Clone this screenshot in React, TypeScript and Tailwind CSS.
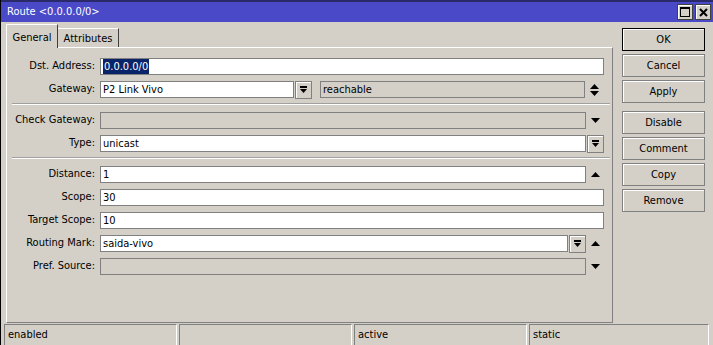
import React from "react";

const Up = () => (
  <svg width="9" height="5" viewBox="0 0 9 5"><path d="M0 5h9L4.5 0z" fill="#000" /></svg>
);
const Down = () => (
  <svg width="9" height="5" viewBox="0 0 9 5"><path d="M0 0h9L4.5 5z" fill="#000" /></svg>
);
const UpDown = () => (
  <svg width="9" height="12" viewBox="0 0 9 12">
    <path d="M0 5h9L4.5 0z" fill="#000" />
    <path d="M0 7h9L4.5 12z" fill="#000" />
  </svg>
);

const DropBtn = () => (
  <div className="ml-px flex h-[18px] w-[17px] shrink-0 items-center justify-center border border-[#808080] shadow-[inset_1px_1px_0_#fff]">
    <svg width="9" height="9" viewBox="0 0 9 9">
      <rect x="1" y="1" width="7" height="2" fill="#000" />
      <path d="M1 4h7L4.5 8z" fill="#000" />
    </svg>
  </div>
);

const Field = ({ w, value, disabled, children }: { w?: string; value?: string; disabled?: boolean; children?: React.ReactNode }) => (
  <div
    className={`flex h-[17px] shrink-0 items-center border border-[#808080] pl-[2px] leading-none ${disabled ? "bg-[#d4d0c8]" : "bg-white"} ${w ?? "w-full"}`}
  >
    {children ?? value}
  </div>
);

const IconCell = ({ children }: { children?: React.ReactNode }) => (
  <div className="flex w-[18px] shrink-0 items-center justify-center">{children}</div>
);

const Row = ({ label, children }: { label: string; children: React.ReactNode }) => (
  <div className="flex h-[17px] shrink-0 items-center">
    <div className="w-[88px] shrink-0 text-right">{label}</div>
    <div className="ml-[5px] flex w-[504px] items-center">{children}</div>
  </div>
);

const Sep = () => (
  <div className="mt-[5px] mb-[7px] ml-[5px] w-[598px] shrink-0 border-t border-b border-t-[#a0a0a0] border-b-white" />
);

const Btn = ({ label, primary }: { label: string; primary?: boolean }) => (
  <div
    className={`flex h-[23px] w-[83px] items-center justify-center border pt-[2px] shadow-[inset_1px_1px_0_#fff] ${primary ? "border-black" : "border-[#808080]"}`}
  >
    {label}
  </div>
);

const Status = ({ w, text }: { w: string; text?: string }) => (
  <div className={`flex h-[22px] items-center border border-t-[#808080] border-l-[#808080] border-r-white border-b-white pl-[3px] ${w}`}>
    {text}
  </div>
);

export default function App() {
  return (
    <div className="flex h-[345px] w-[713px] flex-col overflow-hidden border-l border-black bg-[#d4d0c8] font-['DejaVu_Sans_Condensed','DejaVu_Sans',sans-serif] text-[11px] text-black">
      {/* title bar */}
      <div className="flex h-[22px] shrink-0 items-center border-t-2 border-[#2a2a6a] bg-[#4a4ac8] pl-[6px] pr-[2px] text-white">
        <span className="flex-1">Route &lt;0.0.0.0/0&gt;</span>
        <div className="flex gap-[2px]">
          <div className="flex h-[16px] w-[16px] items-center justify-center border border-[#404040] bg-[#d4d0c8] shadow-[inset_1px_1px_0_#fff]">
            <svg width="10" height="10" viewBox="0 0 10 10">
              <rect x="0.5" y="0.5" width="9" height="9" fill="none" stroke="#000" />
              <rect x="0" y="0" width="10" height="2" fill="#000" />
            </svg>
          </div>
          <div className="flex h-[16px] w-[16px] items-center justify-center border border-[#404040] bg-[#d4d0c8] shadow-[inset_1px_1px_0_#fff]">
            <svg width="9" height="9" viewBox="0 0 9 9">
              <path d="M1 1L8 8M8 1L1 8" stroke="#000" strokeWidth="2" />
            </svg>
          </div>
        </div>
      </div>

      {/* main */}
      <div className="flex h-[301px] shrink-0">
        <div className="ml-[5px] flex w-[607px] flex-col pt-[2px]">
          <div className="relative z-10 -mb-px flex h-[24px] items-end">
            <div className="flex h-[24px] w-[52px] items-center justify-center border-t border-l border-r border-t-white border-l-white border-r-[#404040] bg-[#d4d0c8] pt-[3px]">
              General
            </div>
            <div className="mb-px flex h-[19px] w-[61px] items-center justify-center border-t border-r border-t-white border-r-[#404040] bg-[#d4d0c8] pt-[3px]">
              Attributes
            </div>
          </div>
          <div className="flex h-[276px] flex-col border border-t-white border-l-white border-r-[#808080] border-b-[#808080] pt-[10px]">
            <Row label="Dst. Address:">
              <Field>
                <span className="bg-[#0a246a] px-px py-[2px] text-white">0.0.0.0/0</span>
              </Field>
            </Row>
            <div className="h-[6px] shrink-0" />
            <Row label="Gateway:">
              <Field w="w-[194px]" value="P2 Link Vivo" />
              <DropBtn />
              <div className="ml-[8px]">
                <Field w="w-[265px]" value="reachable" disabled />
              </div>
              <IconCell>
                <UpDown />
              </IconCell>
            </Row>
            <Sep />
            <Row label="Check Gateway:">
              <Field w="w-[486px]" disabled />
              <IconCell>
                <Down />
              </IconCell>
            </Row>
            <div className="h-[6px] shrink-0" />
            <Row label="Type:">
              <Field w="w-[486px]" value="unicast" />
              <DropBtn />
            </Row>
            <Sep />
            <Row label="Distance:">
              <Field w="w-[486px]" value="1" />
              <IconCell>
                <Up />
              </IconCell>
            </Row>
            <div className="h-[6px] shrink-0" />
            <Row label="Scope:">
              <Field value="30" />
            </Row>
            <div className="h-[6px] shrink-0" />
            <Row label="Target Scope:">
              <Field value="10" />
            </Row>
            <div className="h-[6px] shrink-0" />
            <Row label="Routing Mark:">
              <Field w="w-[468px]" value="saida-vivo" />
              <DropBtn />
              <IconCell>
                <Up />
              </IconCell>
            </Row>
            <div className="h-[6px] shrink-0" />
            <Row label="Pref. Source:">
              <Field w="w-[486px]" disabled />
              <IconCell>
                <Down />
              </IconCell>
            </Row>
          </div>
        </div>

        <div className="ml-[9px] flex flex-col pt-[6px]">
          <div className="flex flex-col gap-[3px]">
            <Btn label="OK" primary />
            <Btn label="Cancel" />
            <Btn label="Apply" />
          </div>
          <div className="mt-[8px] flex flex-col gap-[3px]">
            <Btn label="Disable" />
            <Btn label="Comment" />
            <Btn label="Copy" />
            <Btn label="Remove" />
          </div>
        </div>
      </div>

      {/* status bar */}
      <div className="mt-px flex gap-[2px] pl-[3px]">
        <Status w="w-[173px]" text="enabled" />
        <Status w="w-[173px]" />
        <Status w="w-[173px]" text="active" />
        <Status w="w-[180px]" text="static" />
      </div>
    </div>
  );
}
